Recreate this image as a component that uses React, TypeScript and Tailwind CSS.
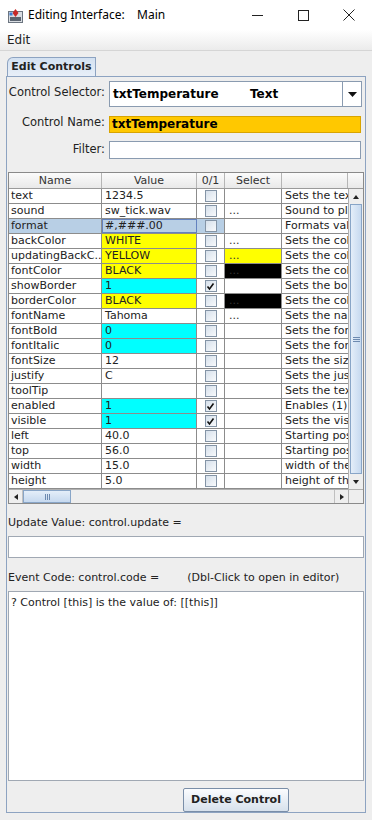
import React from 'react';

type Row = {
  name: string;
  value: string;
  valueBg?: string;
  checked?: boolean;
  select?: string;
  selectBg?: string;
  desc: string;
  selected?: boolean;
};

const rows: Row[] = [
  { name: 'text', value: '1234.5', desc: 'Sets the text value' },
  { name: 'sound', value: 'sw_tick.wav', select: '...', desc: 'Sound to play' },
  { name: 'format', value: '#,###.00', desc: 'Formats value', selected: true },
  { name: 'backColor', value: 'WHITE', valueBg: 'bg-[#ffff00]', select: '...', desc: 'Sets the color' },
  { name: 'updatingBackC...', value: 'YELLOW', valueBg: 'bg-[#ffff00]', select: '...', selectBg: 'bg-[#ffff00]', desc: 'Sets the color' },
  { name: 'fontColor', value: 'BLACK', valueBg: 'bg-[#ffff00]', select: '...', selectBg: 'bg-black', desc: 'Sets the color' },
  { name: 'showBorder', value: '1', valueBg: 'bg-[#00ffff]', checked: true, desc: 'Sets the border' },
  { name: 'borderColor', value: 'BLACK', valueBg: 'bg-[#ffff00]', select: '...', selectBg: 'bg-black', desc: 'Sets the color' },
  { name: 'fontName', value: 'Tahoma', select: '...', desc: 'Sets the name' },
  { name: 'fontBold', value: '0', valueBg: 'bg-[#00ffff]', desc: 'Sets the font' },
  { name: 'fontItalic', value: '0', valueBg: 'bg-[#00ffff]', desc: 'Sets the font' },
  { name: 'fontSize', value: '12', desc: 'Sets the size' },
  { name: 'justify', value: 'C', desc: 'Sets the justify' },
  { name: 'toolTip', value: '', desc: 'Sets the text' },
  { name: 'enabled', value: '1', valueBg: 'bg-[#00ffff]', checked: true, desc: 'Enables (1) or' },
  { name: 'visible', value: '1', valueBg: 'bg-[#00ffff]', checked: true, desc: 'Sets the visible' },
  { name: 'left', value: '40.0', desc: 'Starting position' },
  { name: 'top', value: '56.0', desc: 'Starting position' },
  { name: 'width', value: '15.0', desc: 'width of the control' },
  { name: 'height', value: '5.0', desc: 'height of the control' },
];

const uiFont = { fontFamily: '"DejaVu Sans", Verdana, sans-serif' };

const CheckBox: React.FC<{ checked?: boolean }> = ({ checked }) => (
  <div className="w-[12px] h-[12px] border border-[#8494a6] bg-gradient-to-br from-[#d6e0eb] to-[#f8fafc] flex items-center justify-center">
    {checked && (
      <svg width="9" height="9" viewBox="0 0 9 9">
        <path d="M1.5 4.5 L3.5 7 L7.5 1.5" stroke="#111" strokeWidth="1.6" fill="none" />
      </svg>
    )}
  </div>
);

const Arrow: React.FC<{ dir: 'up' | 'down' | 'left' | 'right' }> = ({ dir }) => {
  const d = {
    up: 'M1 6 L4 2 L7 6 Z',
    down: 'M1 2 L4 6 L7 2 Z',
    left: 'M6 1 L2 4 L6 7 Z',
    right: 'M2 1 L6 4 L2 7 Z',
  }[dir];
  return (
    <svg width="8" height="8" viewBox="0 0 8 8">
      <path d={d} fill="#222" />
    </svg>
  );
};

const PropertyTable: React.FC = () => {
  const cols = 'grid grid-cols-[93px_95px_28px_57px_66px]';
  return (
    <div className="mt-[8px] border border-[#8a8a8a] bg-white h-[332px] flex flex-col text-[11px] text-[#222]">
      <div className="flex h-[16px] border-b border-[#9a9a9a] bg-gradient-to-b from-[#fbfbfb] to-[#e9e9e9]">
        <div className={cols + ' text-[#333]'}>
          {['Name', 'Value', '0/1', 'Select', ''].map((h, i) => (
            <div key={i} className="border-r border-[#b5b5b5] flex items-center justify-center leading-none">
              {h}
            </div>
          ))}
        </div>
        <div className="flex-1" />
      </div>
      <div className="flex flex-1 min-h-0">
        <div className="flex flex-col w-[339px]">
          <div className="h-[301px] overflow-hidden">
            {rows.map((r) => (
              <div key={r.name} className={cols + ' h-[15px] border-b border-[#8c8c8c]'}>
                <div className={'border-r border-[#8c8c8c] pl-[2px] flex items-center whitespace-nowrap overflow-hidden ' + (r.selected ? 'bg-[#b8cfe5]' : '')}>
                  {r.name}
                </div>
                <div
                  className={
                    'border-r border-[#8c8c8c] pl-[3px] flex items-center whitespace-nowrap overflow-hidden ' +
                    (r.selected ? 'bg-[#b8cfe5] outline outline-1 outline-[#6382bf] -outline-offset-1' : r.valueBg ?? '')
                  }
                >
                  {r.value}
                </div>
                <div className={'border-r border-[#8c8c8c] flex items-center justify-center ' + (r.selected ? 'bg-[#b8cfe5]' : '')}>
                  <CheckBox checked={r.checked} />
                </div>
                <div className={'border-r border-[#8c8c8c] pl-[4px] flex items-center text-[#333] leading-none pb-[2px] ' + (r.selectBg ?? '')}>
                  {r.select}
                </div>
                <div className="pl-[3px] flex items-center whitespace-nowrap overflow-hidden">{r.desc}</div>
              </div>
            ))}
          </div>
          <div className="h-[14px] flex bg-[#eeeeee] border-t border-[#b0b0b0]">
            <div className="w-[14px] flex items-center justify-center border-r border-[#c0c0c0]">
              <Arrow dir="left" />
            </div>
            <div className="w-[48px] bg-gradient-to-b from-[#e4eef9] to-[#c6d9ef] border border-[#88a5c7] flex items-center justify-center gap-[1px]">
              <div className="w-px h-[6px] bg-[#6d8ab0]" />
              <div className="w-px h-[6px] bg-[#6d8ab0]" />
              <div className="w-px h-[6px] bg-[#6d8ab0]" />
            </div>
            <div className="flex-1" />
            <div className="w-[14px] flex items-center justify-center border-l border-[#c0c0c0]">
              <Arrow dir="right" />
            </div>
          </div>
        </div>
        <div className="w-[15px] flex flex-col bg-[#eeeeee] border-l border-[#b0b0b0]">
          <div className="h-[15px] flex items-center justify-center">
            <Arrow dir="up" />
          </div>
          <div className="h-[270px] mx-[1px] bg-gradient-to-r from-[#e4eef9] to-[#c6d9ef] border border-[#88a5c7] flex flex-col items-center justify-center gap-[1px]">
            <div className="h-px w-[7px] bg-[#6d8ab0]" />
            <div className="h-px w-[7px] bg-[#6d8ab0]" />
            <div className="h-px w-[7px] bg-[#6d8ab0]" />
          </div>
          <div className="h-[14px] flex items-center justify-center mt-[1px]">
            <Arrow dir="down" />
          </div>
          <div className="flex-1 border-t border-[#b0b0b0]" />
        </div>
      </div>
    </div>
  );
};

const App: React.FC = () => {
  return (
    <div className="w-[372px] h-[820px] bg-[#eeeeee] flex flex-col overflow-hidden text-[#222]" style={uiFont}>
      <header
        className="h-[30px] bg-white flex items-center pl-[8px] text-[12px] text-black"
        style={{ fontFamily: '"Noto Sans", "Open Sans", sans-serif' }}
      >
        <svg width="15" height="15" viewBox="0 0 15 15" className="mr-[5px]">
          <rect x="0.5" y="3.5" width="14" height="11" fill="#d9dde2" stroke="#6c7580" />
          <rect x="2" y="9" width="11" height="4" fill="#5b6470" />
          <path d="M7.5 1 L10.5 5 L7.5 9 L4.5 5 Z" fill="#c62828" />
          <rect x="1.5" y="4.5" width="3" height="3" fill="#3b7bd4" />
        </svg>
        <span className="whitespace-pre">Editing Interface:    Main</span>
        <div className="flex-1" />
        <div className="flex items-center h-full">
          <div className="w-[46px] flex justify-center">
            <div className="w-[11px] h-px bg-[#222]" />
          </div>
          <div className="w-[46px] flex justify-center">
            <div className="w-[11px] h-[11px] border border-[#222]" />
          </div>
          <div className="w-[46px] flex justify-center">
            <svg width="12" height="12" viewBox="0 0 12 12">
              <path d="M0.5 0.5 L11.5 11.5 M11.5 0.5 L0.5 11.5" stroke="#222" strokeWidth="1" />
            </svg>
          </div>
        </div>
      </header>

      <nav className="h-[21px] bg-gradient-to-b from-[#ffffff] to-[#ebebeb] border-b border-[#d5d5d5] flex items-center pl-[7px] text-[12px]">
        Edit
      </nav>

      <div className="flex-1 flex flex-col px-[6px] pt-[6px] pb-[7px]">
        <div className="flex">
          <div className="ml-[1px] h-[19px] w-[89px] border border-b-0 border-[#8da3c1] rounded-tl-[6px] bg-gradient-to-b from-[#d3e1f1] to-[#e8eff8] flex items-center justify-center font-bold text-[11px] text-[#222]">
            Edit Controls
          </div>
        </div>
        <div className="flex-1 border border-[#8da3c1] px-[1px] flex flex-col">
          <div className="grid grid-cols-[97px_1fr] gap-x-[4px] items-center text-[11.5px] whitespace-nowrap">
            <div className="h-[30px] flex items-center justify-end pt-[2px]">Control Selector:</div>
            <div className="h-[26px] mt-[4px] mr-[2px] bg-white border border-[#8a9bb0] flex">
              <div className="flex-1 flex items-center pl-[3px] font-bold text-[12px] text-black">
                <span className="w-[137px]">txtTemperature</span>
                <span>Text</span>
              </div>
              <div className="w-[19px] border-l border-[#8a9bb0] flex items-center justify-center">
                <svg width="9" height="5" viewBox="0 0 9 5">
                  <path d="M0 0 L9 0 L4.5 5 Z" fill="#111" />
                </svg>
              </div>
            </div>
            <div className="h-[29px] flex items-center justify-end pt-[3px]">Control Name:</div>
            <div className="h-[17px] mt-[5px] mr-[3px] bg-[#ffc800] border border-[#d8a400] flex items-center pl-[2px] font-bold text-[12px] text-black">
              txtTemperature
            </div>
            <div className="h-[28px] flex items-center justify-end">Filter:</div>
            <div className="h-[18px] mr-[3px] bg-white border border-[#8a9bb0]" />
          </div>

          <PropertyTable />

          <div className="mt-[11px] text-[11px] h-[16px] flex items-center">Update Value: control.update =</div>
          <div className="mt-[5px] h-[22px] bg-white border border-[#a0a8b3]" />
          <div className="mt-[12px] text-[11px] h-[16px] flex items-center whitespace-pre">
            Event Code: control.code =        (Dbl-Click to open in editor)
          </div>
          <div className="mt-[5px] h-[190px] bg-white border border-[#a0a8b3] text-[11px] pl-[2px] pt-[3px]">
            ? Control [this] is the value of: [[this]]
          </div>
          <div className="flex mt-[7px] pl-[175px]">
            <div className="w-[106px] h-[24px] border border-[#7a8ea8] rounded-[2px] bg-gradient-to-b from-[#fbfcfe] to-[#d7e1ec] flex items-center justify-center font-bold text-[11px] text-[#222]">
              Delete Control
            </div>
          </div>
        </div>
      </div>
    </div>
  );
};

export default App;
